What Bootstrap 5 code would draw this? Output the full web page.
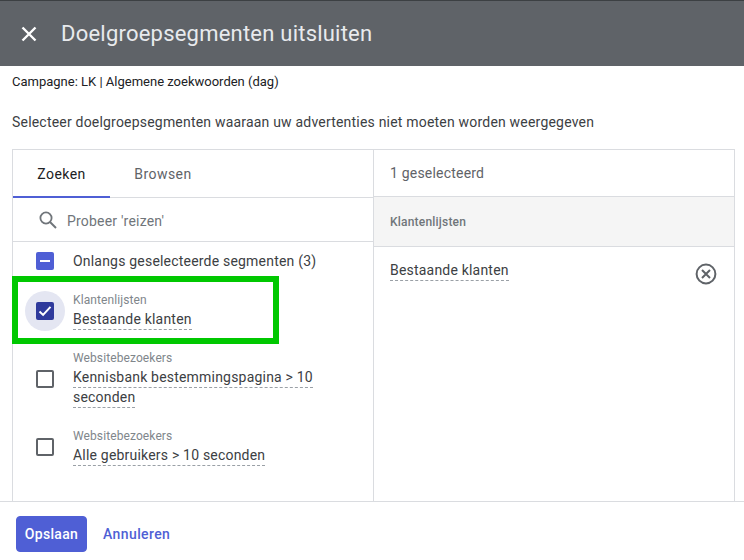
<!DOCTYPE html>
<html lang="en">
	<head>
		<meta charset="UTF-8" />
		<title>Doelgroepsegmenten uitsluiten</title>
		<link href="https://cdn.jsdelivr.net/npm/bootstrap@5.3.0/dist/css/bootstrap.min.css" rel="stylesheet" />
		<style>
			body {
				width: 744px;
				height: 560px;
				overflow: hidden;
				background: #fff;
				font-family: Roboto, "Liberation Sans", sans-serif;
				font-size: 14px;
				color: #3c4043;
				position: relative;
			}
			.dlg-head {
				height: 66px;
				background: #5f6368;
				border-top: 1px solid #3c4043;
				padding-left: 20px;
				gap: 23px;
			}
			.dlg-title {
				font-size: 22px;
				color: #e8eaed;
				letter-spacing: 0.22px;
			}
			.camp-line {
				font-size: 13px;
				line-height: 16px;
				color: #202124;
				padding: 8px 12px 0;
			}
			.intro-line {
				line-height: 20px;
				letter-spacing: 0.2px;
				padding: 22px 12px 0;
				height: 59px;
			}
			.seg-panel {
				margin-left: 12px;
				width: 723px;
				height: 352px;
				border: 1px solid #dadce0;
				border-bottom: 0;
			}
			.seg-left {
				width: 361px;
				border-right: 1px solid #dadce0;
			}
			.seg-tabs {
				height: 48px;
				border-bottom: 1px solid #dadce0;
				letter-spacing: 0.45px;
			}
			.seg-tab {
				width: 97px;
				text-align: center;
				line-height: 48px;
				color: #5f6368;
			}
			.seg-tab.on {
				color: #202124;
				border-bottom: 2px solid #4f5fd5;
				height: 48px;
			}
			.seg-tab + .seg-tab {
				width: 106px;
			}
			.seg-search {
				height: 44px;
				padding: 3px 0 0 25px;
				gap: 9px;
				border-bottom: 1px solid #dadce0;
				color: #70757a;
				letter-spacing: 0.2px;
			}
			.seg-search svg {
				margin-top: -2px;
			}
			.seg-row {
				padding-left: 60px;
				position: relative;
				letter-spacing: 0.2px;
			}
			.seg-row-first {
				height: 38px;
				margin-bottom: 2px;
			}
			.seg-row-one {
				height: 58px;
			}
			.seg-row-two {
				height: 78px;
			}
			.seg-box {
				position: absolute;
				left: 23px;
				width: 18px;
				height: 18px;
				border-radius: 2px;
			}
			.box-empty {
				border: 2px solid #5f6368;
			}
			.box-minus {
				background: #4f5fd5;
			}
			.box-check {
				background: #2f3a9c;
			}
			.box-halo {
				position: absolute;
				left: 12px;
				width: 40px;
				height: 40px;
				border-radius: 50%;
				background: #e4e6f2;
			}
			.seg-cat {
				font-size: 12px;
				line-height: 16px;
				color: #80868b;
				letter-spacing: 0.1px;
				margin: -1px 0 1px;
			}
			.seg-name {
				line-height: 20px;
				color: #3c4043;
			}
			.dash-text {
				border-bottom: 1px dashed #9aa0a6;
				padding-bottom: 2px;
			}
			.seg-right-head {
				height: 47px;
				padding-left: 16px;
				border-bottom: 1px solid #dadce0;
				letter-spacing: 0.2px;
				color: #5f6368;
			}
			.seg-right-cat {
				height: 50px;
				padding-left: 16px;
				background: #f5f5f5;
				border-bottom: 1px solid #dadce0;
				font-size: 12px;
				font-weight: 500;
				letter-spacing: 0.2px;
				color: #70757a;
			}
			.seg-right-item {
				padding: 13px 17px 0 16px;
				letter-spacing: 0.2px;
			}
			.seg-right-item svg {
				margin-top: 3px;
			}
			.green-mark {
				position: absolute;
				left: 12px;
				top: 276px;
				width: 267px;
				height: 68px;
				border: 6px solid #00c800;
			}
			.dlg-foot {
				height: 59px;
				border-top: 1px solid #dadce0;
				padding: 6px 0 0 16px;
				gap: 16px;
			}
			.btn-save {
				--bs-btn-bg: #4f5fd5;
				--bs-btn-color: #fff;
				--bs-btn-border-color: #4f5fd5;
				--bs-btn-padding-x: 0;
				--bs-btn-padding-y: 0;
				--bs-btn-font-size: 14px;
				--bs-btn-font-weight: 500;
				--bs-btn-border-radius: 4px;
				letter-spacing: 0.3px;
				width: 71px;
				height: 36px;
			}
			.link-cancel {
				color: #4f5fd5;
				font-weight: 500;
				letter-spacing: 0.4px;
				text-decoration: none;
			}
		</style>
	</head>
	<body>
		<div class="dlg-head d-flex align-items-center">
			<svg width="18" height="18" viewBox="0 0 18 18"><path d="M2.5 2.5l13 13M15.5 2.5l-13 13" stroke="#fff" stroke-width="2.4" fill="none" /></svg>
			<div class="dlg-title">Doelgroepsegmenten uitsluiten</div>
		</div>
		<div class="camp-line">Campagne: LK | Algemene zoekwoorden (dag)</div>
		<div class="intro-line">Selecteer doelgroepsegmenten waaraan uw advertenties niet moeten worden weergegeven</div>

		<div class="seg-panel d-flex">
			<div class="seg-left">
				<div class="seg-tabs d-flex">
					<div class="seg-tab on">Zoeken</div>
					<div class="seg-tab">Browsen</div>
				</div>
				<div class="seg-search d-flex align-items-center">
					<svg width="20" height="20" viewBox="0 0 20 20"><circle cx="8" cy="8" r="5.6" stroke="#70757a" stroke-width="1.8" fill="none" /><path d="M12 12l6 6" stroke="#70757a" stroke-width="2" /></svg>
					<span>Probeer 'reizen'</span>
				</div>

				<div class="seg-row seg-row-first d-flex align-items-center">
					<span class="seg-box box-minus d-flex align-items-center justify-content-center"><svg width="10" height="2" viewBox="0 0 10 2"><rect width="10" height="2" fill="#fff" /></svg></span>
					<span class="seg-name">Onlangs geselecteerde segmenten (3)</span>
				</div>

				<div class="seg-row seg-row-one d-flex align-items-center">
					<span class="box-halo"></span>
					<span class="seg-box box-check d-flex align-items-center justify-content-center"><svg width="14" height="12" viewBox="0 0 14 12"><path d="M1.5 6.5l3.6 3.4 7.4-8" stroke="#fff" stroke-width="2" fill="none" /></svg></span>
					<div>
						<div class="seg-cat">Klantenlijsten</div>
						<div class="seg-name"><span class="dash-text">Bestaande klanten</span></div>
					</div>
				</div>

				<div class="seg-row seg-row-two d-flex align-items-center">
					<span class="seg-box box-empty"></span>
					<div>
						<div class="seg-cat">Websitebezoekers</div>
						<div class="seg-name"><span class="dash-text">Kennisbank bestemmingspagina &gt; 10</span><br /><span class="dash-text">seconden</span></div>
					</div>
				</div>

				<div class="seg-row seg-row-one d-flex align-items-center">
					<span class="seg-box box-empty"></span>
					<div>
						<div class="seg-cat">Websitebezoekers</div>
						<div class="seg-name"><span class="dash-text">Alle gebruikers &gt; 10 seconden</span></div>
					</div>
				</div>
			</div>

			<div class="flex-grow-1">
				<div class="seg-right-head d-flex align-items-center">1 geselecteerd</div>
				<div class="seg-right-cat d-flex align-items-center">Klantenlijsten</div>
				<div class="seg-right-item d-flex justify-content-between">
					<span class="seg-name"><span class="dash-text">Bestaande klanten</span></span>
					<svg width="22" height="22" viewBox="0 0 22 22"><circle cx="11" cy="11" r="9.4" stroke="#5f6368" stroke-width="2" fill="none" /><path d="M7 7l8 8M15 7l-8 8" stroke="#5f6368" stroke-width="2" /></svg>
				</div>
			</div>
		</div>

		<div class="dlg-foot d-flex align-items-center">
			<button class="btn btn-save">Opslaan</button>
			<a class="link-cancel" href="#">Annuleren</a>
		</div>

		<div class="green-mark"></div>

		<script src="https://cdn.jsdelivr.net/npm/bootstrap@5.3.0/dist/js/bootstrap.bundle.min.js"></script>
	</body>
</html>
